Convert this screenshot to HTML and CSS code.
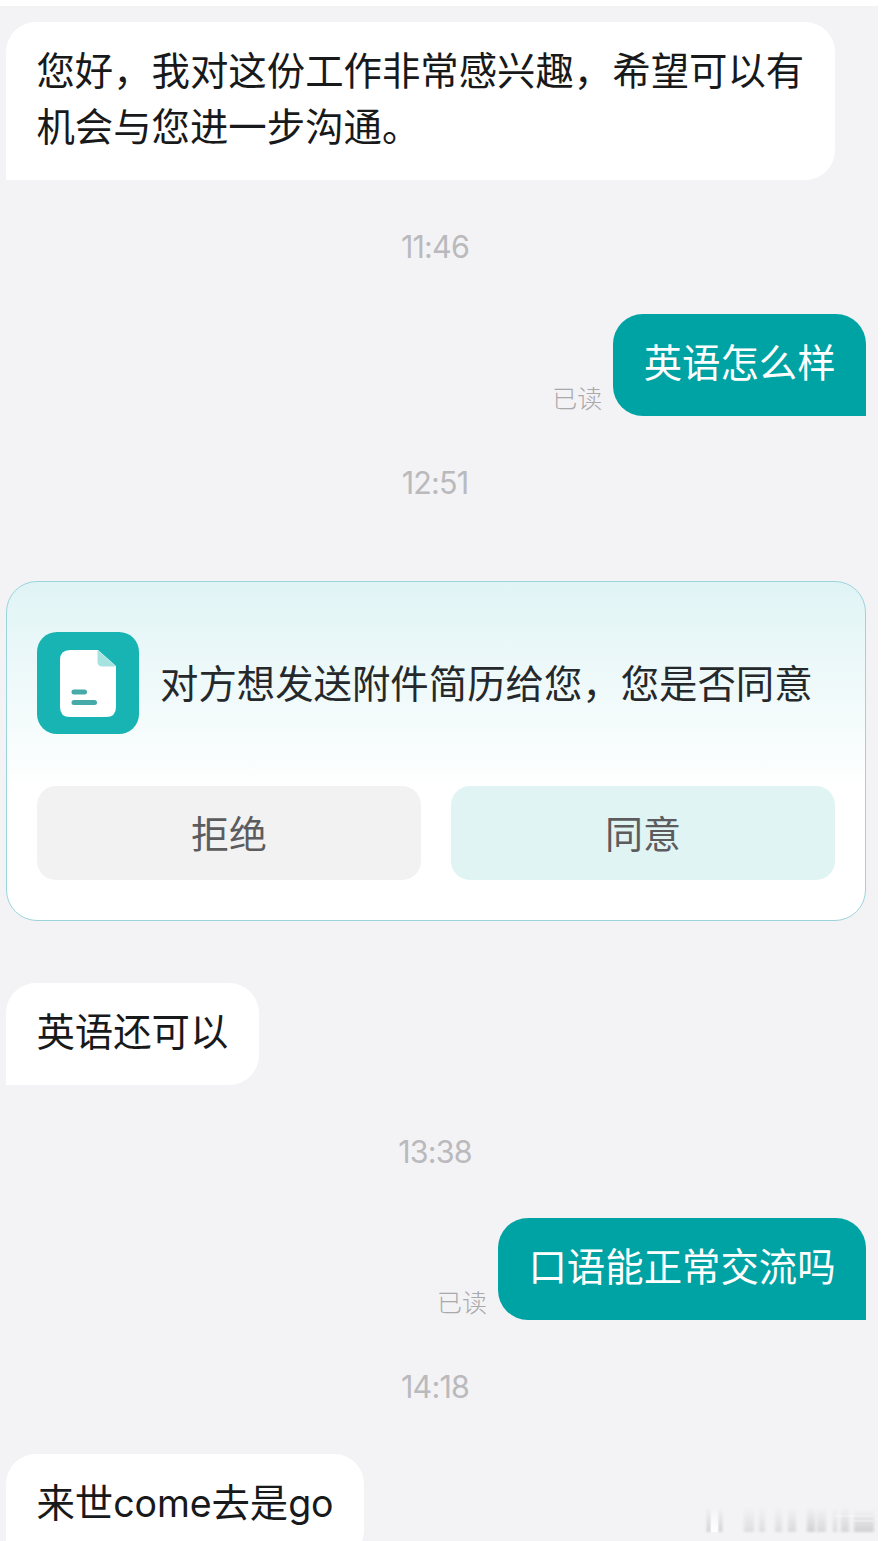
FILE: index.html
```html
<!DOCTYPE html>
<html lang="zh-CN">
<head>
    <meta charset="UTF-8">
    <meta name="viewport" content="width=device-width, initial-scale=1.0">
    <title>聊天</title>
    <link rel="stylesheet" href="styles.css">
</head>
<body>
    <main class="chat">
        <div class="row">
            <div class="bubble">您好，我对这份工作非常感兴趣，希望可以有机会与您进一步沟通。</div>
        </div>

        <div class="time">11:46</div>

        <div class="row sent">
            <span class="read">已读</span>
            <div class="bubble">英语怎么样</div>
        </div>

        <div class="time">12:51</div>

        <div class="card">
            <div class="card-head">
                <svg class="card-icon" viewBox="0 0 102 102">
                    <rect width="102" height="102" rx="20" fill="#18b3b3"/>
                    <path d="M33 18H61L79 34V75Q79 85 69 85H33Q23 85 23 75V28Q23 18 33 18Z" fill="#fff"/>
                    <path d="M60.500 18L79 34.500H65.500Q60.500 34.500 60.500 29.500Z" fill="#a5e3e1"/>
                    <path d="M37 60H47.500M37 70.500H57.500" stroke="#45aaa8" stroke-width="5" stroke-linecap="round"/>
                </svg>
                <p class="card-text">对方想发送附件简历给您，您是否同意</p>
            </div>
            <div class="card-actions">
                <button class="btn">拒绝</button>
                <button class="btn agree">同意</button>
            </div>
        </div>

        <div class="row">
            <div class="bubble">英语还可以</div>
        </div>

        <div class="time">13:38</div>

        <div class="row sent">
            <span class="read">已读</span>
            <div class="bubble">口语能正常交流吗</div>
        </div>

        <div class="time">14:18</div>

        <div class="row">
            <div class="bubble">来世<span class="latin">come</span>去是<span class="latin">go</span></div>
        </div>

        <!-- faded mark in the corner -->
        <svg class="mark" viewBox="0 0 176 34">
            <defs>
                <linearGradient id="fade" x1="0" y1="0" x2="0" y2="1">
                    <stop offset="0" stop-color="#c8c8ca" stop-opacity="0"/>
                    <stop offset="1" stop-color="#c8c8ca"/>
                </linearGradient>
                <linearGradient id="light" x1="0" y1="0" x2="0" y2="1">
                    <stop offset="0" stop-color="#fff" stop-opacity="0"/>
                    <stop offset="1" stop-color="#fff"/>
                </linearGradient>
                <filter id="soft" x="-10%" y="-20%" width="120%" height="140%">
                    <feGaussianBlur stdDeviation="1.800 0.800"/>
                </filter>
            </defs>
            <g fill="url(#fade)" filter="url(#soft)">
                <rect x="5" y="0" width="3" height="25"/>
                <rect x="17" y="0" width="3" height="25"/>
                <rect x="42" y="0" width="10" height="25" opacity=".5"/>
                <rect x="57" y="0" width="6" height="25" opacity=".5"/>
                <rect x="73" y="0" width="7" height="25" opacity=".5"/>
                <rect x="86" y="0" width="8" height="25" opacity=".6"/>
                <rect x="105" y="0" width="8" height="25" opacity=".8"/>
                <rect x="115" y="0" width="9" height="25" opacity=".6"/>
                <rect x="131" y="0" width="4" height="25" opacity=".6"/>
                <rect x="139" y="0" width="8" height="25" opacity=".7"/>
                <rect x="152" y="2" width="20" height="23" opacity=".8"/>
            </g>
            <rect x="9" y="0" width="7" height="25" fill="url(#light)"/>
            <path d="M132 9H171M152 14H171" stroke="#fff" stroke-width="1.200" opacity=".6"/>
        </svg>
    </main>
</body>
</html>
```

FILE: styles.css
```css
* {
    box-sizing: border-box;
}
body {
    margin: 0;
    padding-top: 6px;
    height: 1541px;
    overflow: hidden;
    background-color: #fff;
    font-family: "Noto Sans CJK SC", sans-serif;
    color: #18191a;
}
.chat {
    position: relative;
    width: 878px;
    height: 1535px;
    padding: 16px 12px 0 6px;
    background-color: #f3f3f6;
    overflow: hidden;
}
.row {
    display: flex;
    align-items: flex-end;
}
.bubble {
    max-width: 829px;
    padding: 18px 30.4px 27.500px;
    border-radius: 30px 30px 30px 0;
    background-color: #fff;
    font-size: 38.400px;
    line-height: 56.400px;
}
.sent {
    justify-content: flex-end;
}
.sent .bubble {
    border-radius: 30px 30px 0 30px;
    background-color: #00a3a4;
    color: #fff;
}
.read {
    margin-right: 11px;
    padding-bottom: 2px;
    font-size: 25px;
    line-height: 34px;
    font-weight: 300;
    color: #a9a9ab;
}
.time {
    height: 133.700px;
    padding-right: 2px;
    font-family: Inter, sans-serif;
    font-size: 30.500px;
    line-height: 134px;
    letter-spacing: -0.8px;
    text-align: center;
    color: #bababd;
}
.latin {
    font-family: Inter, sans-serif;
    font-size: 37.500px;
    letter-spacing: -0.1px;
}
.card {
    height: 340px;
    margin: 31px 0 62px;
    padding: 50px 30px 0;
    border: 1px solid #9bd5da;
    border-radius: 31px;
    background: linear-gradient(#e0f4f5, #fff 62%);
}
.card-head {
    display: flex;
    align-items: center;
    gap: 21px;
}
.card-icon {
    width: 102px;
    height: 102px;
}
.card-text {
    margin: 0;
    padding-bottom: 4px;
    font-size: 38.400px;
    line-height: 56px;
    white-space: nowrap;
    color: #26292b;
}
.card-actions {
    display: flex;
    gap: 30px;
    margin-top: 52px;
}
.btn {
    flex: 1;
    height: 94px;
    padding: 0 0 2px;
    border: none;
    border-radius: 19px;
    background-color: #f2f2f2;
    font-family: inherit;
    font-size: 38px;
    color: #5c5c5e;
}
.agree {
    background-color: #e0f4f3;
}
.mark {
    position: absolute;
    right: 0;
    bottom: 0;
    width: 176px;
    height: 34px;
}
```
